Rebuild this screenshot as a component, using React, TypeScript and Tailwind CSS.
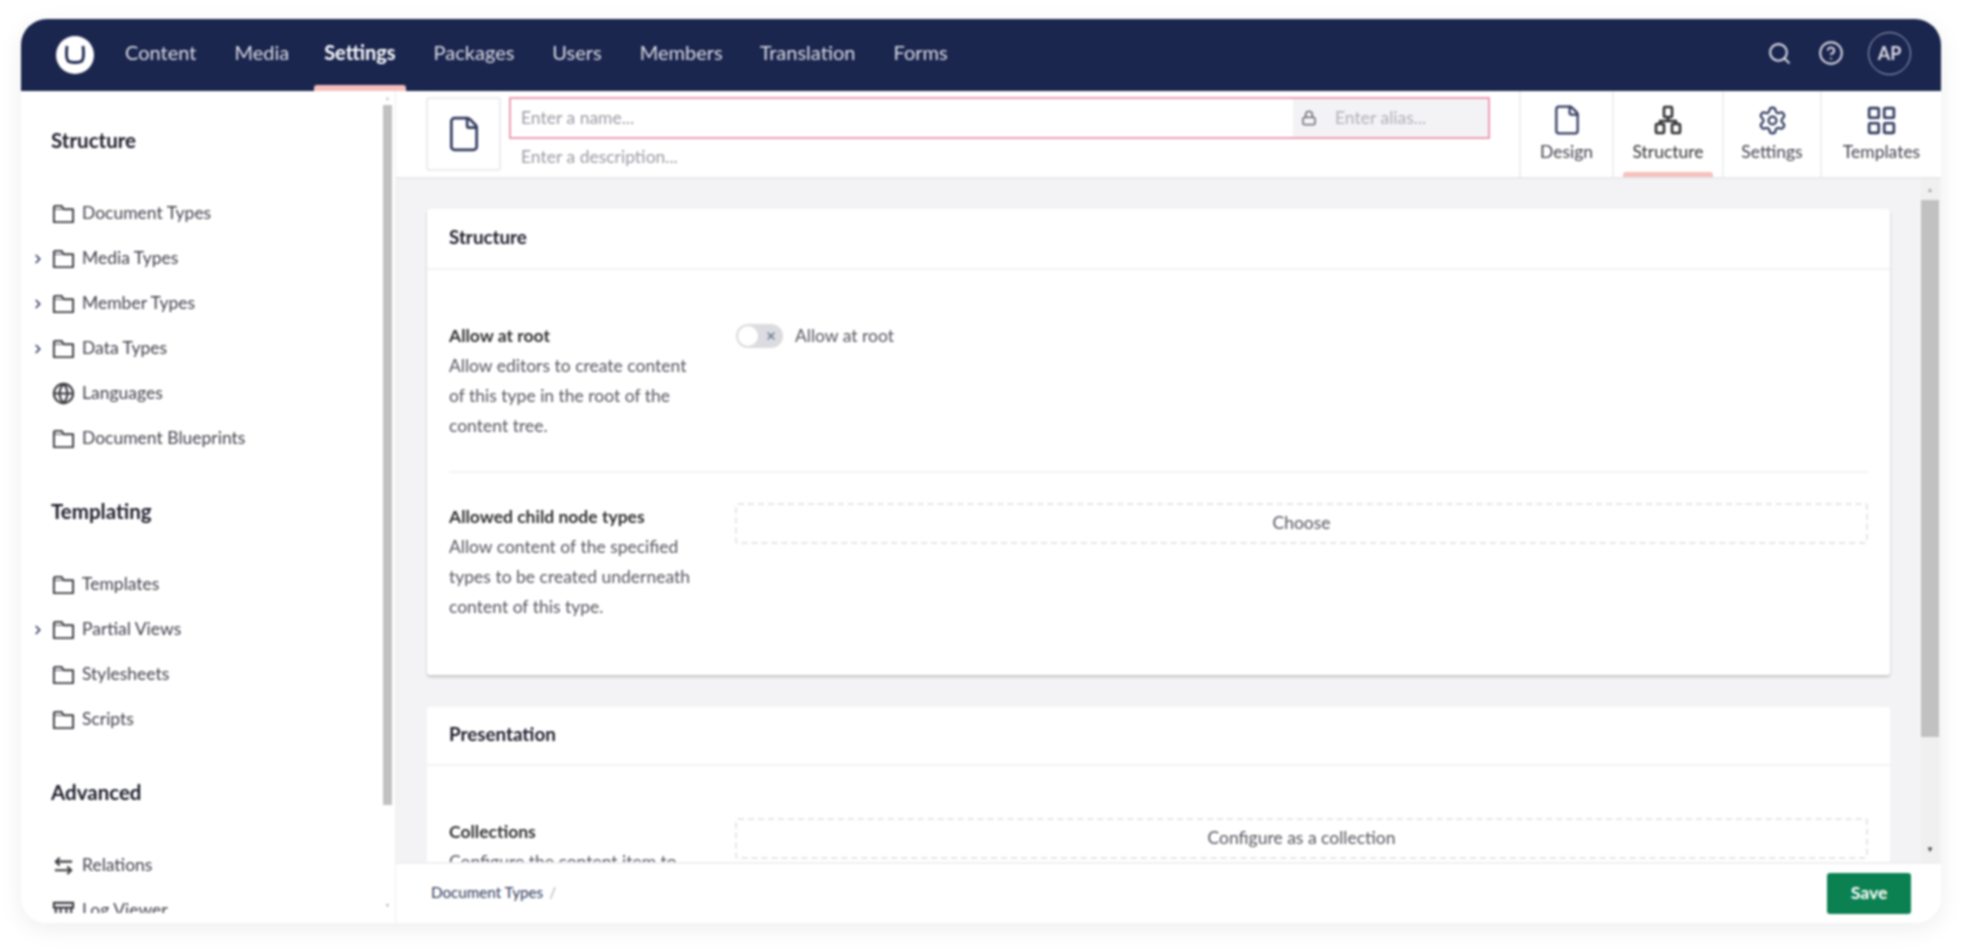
import { ChevronRight, Globe, File, Settings, LayoutGrid, Search, CircleHelp, Lock, X } from "lucide-react";

const navItems = ["Content", "Media", "Settings", "Packages", "Users", "Members", "Translation", "Forms"];

function FolderIcon() {
  return (
    <svg width="23" height="23" viewBox="0 0 24 24" fill="none" stroke="#3b3b42" strokeWidth="2" strokeLinejoin="round">
      <path d="M2 5v16h20V7.500H12L10 4H3.500z" />
      <path d="M11 7.500H2" strokeWidth="1" />
    </svg>
  );
}

function RelationsIcon() {
  return (
    <svg width="23" height="23" viewBox="0 0 24 24" fill="none" stroke="#3b3b42" strokeWidth="2.200">
      <path d="M21 8H4M8 4 4 8l4 4M3 17h17M16 13l4 4-4 4" />
    </svg>
  );
}

function LogIcon() {
  return (
    <svg width="23" height="23" viewBox="0 0 24 24" fill="none" stroke="#3b3b42" strokeWidth="2.200">
      <path d="M2 4h20v5H2zM4 9v12M20 9v12M9 9v7M15 9v7" />
    </svg>
  );
}

function StructureIcon() {
  return (
    <svg width="30" height="30" viewBox="0 0 30 30" fill="none" stroke="#303033" strokeWidth="2.600" strokeLinejoin="round">
      <rect x="11" y="2" width="8" height="10" rx="1" />
      <rect x="3" y="19" width="8" height="9" rx="1" />
      <rect x="19" y="19" width="8" height="9" rx="1" />
      <path d="M15 12v4M7 19v-3h16v3" />
    </svg>
  );
}

function TreeItem({ label, chevron, icon }: { label: string; chevron?: boolean; icon?: React.ReactNode }) {
  return (
    <div className="flex h-[45px] items-center text-[17.500px] text-[#41414d]">
      <div className="flex w-[31px] justify-center pl-[2px]">
        {chevron && <ChevronRight size={14} strokeWidth={3} className="text-[#303a5e]" />}
      </div>
      <div className="flex w-[30px]">{icon ?? <FolderIcon />}</div>
      <span>{label}</span>
    </div>
  );
}

function SideHeading({ children, first }: { children: string; first?: boolean }) {
  return (
    <h3 className={`${first ? "mt-[34px]" : "mt-[35px]"} mb-[36px] h-[30px] pl-[30px] text-[20.500px] leading-[30px] font-bold text-[#1b1b2a]`}>
      {children}
    </h3>
  );
}

function Sidebar() {
  return (
    <aside className="flex w-[374px] shrink-0 bg-white">
      <div className="h-[822px] flex-1 overflow-hidden">
        <SideHeading first>Structure</SideHeading>
        <TreeItem label="Document Types" />
        <TreeItem label="Media Types" chevron />
        <TreeItem label="Member Types" chevron />
        <TreeItem label="Data Types" chevron />
        <TreeItem label="Languages" icon={<Globe size={23} strokeWidth={2.2} className="text-[#3b3b42]" />} />
        <TreeItem label="Document Blueprints" />
        <SideHeading>Templating</SideHeading>
        <TreeItem label="Templates" />
        <TreeItem label="Partial Views" chevron />
        <TreeItem label="Stylesheets" />
        <TreeItem label="Scripts" />
        <SideHeading>Advanced</SideHeading>
        <TreeItem label="Relations" icon={<RelationsIcon />} />
        <TreeItem label="Log Viewer" icon={<LogIcon />} />
      </div>
      <div className="mr-[3px] flex w-[9px] flex-col">
        <div className="flex h-[14px] items-center justify-center text-[6px] leading-none text-[#c8c8c8]">▲</div>
        <div className="h-[700px] bg-[#c1c1c1]" />
        <div className="mt-auto mb-[14px] flex h-[8px] items-center justify-center text-[5px] leading-none text-[#a0a0a0]">▼</div>
      </div>
    </aside>
  );
}

function Tab({ label, active, icon, width }: { label: string; active?: boolean; icon: React.ReactNode; width: string }) {
  return (
    <div className={`${width} relative flex shrink-0 flex-col items-center border-l-2 border-[#f0f0f2] pt-[13px] text-[17.500px] text-[#41414d]`}>
      <div className="flex h-[32px] items-center">{icon}</div>
      <span className={`mt-[3px] ${active ? "text-[#303033]" : ""}`}>{label}</span>
      {active && <div className="absolute right-[9px] bottom-0 left-[9px] h-[5px] rounded-t-[3px] bg-[#f6c1bc]" />}
    </div>
  );
}

function Row({ label, lines, children }: { label: string; lines: string[]; children: React.ReactNode }) {
  return (
    <div className="flex">
      <div className="w-[286px] shrink-0">
        <div className="text-[17.500px] leading-[30px] font-bold text-[#303033]">{label}</div>
        {lines.map((l) => (
          <div key={l} className="text-[17.500px] leading-[30px] whitespace-nowrap text-[#55555f]">
            {l}
          </div>
        ))}
      </div>
      <div className="flex-1">{children}</div>
    </div>
  );
}

function ChooseBox({ label }: { label: string }) {
  return (
    <div className="mt-[1px] flex h-[41px] items-center justify-center rounded-[3px] border-2 border-dashed border-[#e6e6ea] text-[17.500px] text-[#55555f]">
      {label}
    </div>
  );
}

function ContentArea() {
  return (
    <div className="flex h-[683px] bg-[#f3f3f5]">
      <div className="flex-1 overflow-hidden px-[31px] pt-[30px]">
        <section className="h-[466px] rounded-[3px] bg-white shadow-[0_2px_3px_rgba(0,0,0,0.2)]">
          <div className="flex h-[61px] items-center border-b-2 border-[#f3f3f5] px-[22px] pb-[2px] text-[18.800px] font-bold text-[#1b1b2a]">Structure</div>
          <div className="px-[22px] pt-[51px]">
            <Row label="Allow at root" lines={["Allow editors to create content", "of this type in the root of the", "content tree."]}>
              <div className="ml-[1px] flex items-center gap-[12px] pt-[2px]">
                <div className="flex h-[24px] w-[47px] items-center justify-between rounded-full bg-[#dcdce0] px-[2px]">
                  <div className="h-[20px] w-[20px] rounded-full bg-white" />
                  <X size={12} strokeWidth={3} className="mr-[4px] text-[#6c7796]" />
                </div>
                <span className="text-[17.500px] text-[#55555f]">Allow at root</span>
              </div>
            </Row>
            <div className="mt-[30px] mb-[29px] h-[2px] bg-[#f3f3f5]" />
            <Row label="Allowed child node types" lines={["Allow content of the specified", "types to be created underneath", "content of this type."]}>
              <ChooseBox label="Choose" />
            </Row>
          </div>
        </section>
        <section className="mt-[32px] h-[200px] rounded-[3px] bg-white">
          <div className="flex h-[59px] items-center border-b-2 border-[#f3f3f5] px-[22px] pb-[2px] text-[18.800px] font-bold text-[#1b1b2a]">Presentation</div>
          <div className="px-[22px] pt-[51px]">
            <Row label="Collections" lines={["Configure the content item to"]}>
              <ChooseBox label="Configure as a collection" />
            </Row>
          </div>
        </section>
      </div>
      <div className="mr-[2px] flex w-[18px] flex-col bg-[#f0f0f0]">
        <div className="flex h-[21px] items-center justify-center text-[7px] leading-none text-[#a8a8a8]">▲</div>
        <div className="h-[537px] bg-[#c1c1c1]" />
        <div className="mt-auto flex h-[26px] items-center justify-center text-[8px] leading-none text-[#444]">▼</div>
      </div>
    </div>
  );
}

export default function App() {
  return (
    <div className="h-[951px] w-full overflow-hidden bg-white pt-[19px] pl-[21px] [font-family:Lato,'Noto_Sans',sans-serif]">
      <div className="flex h-[904px] w-[1920px] flex-col overflow-hidden rounded-[26px] bg-white shadow-[0_6px_24px_rgba(0,0,0,0.07)] blur-[0.8px]">
        <header className="flex h-[72px] shrink-0 items-center bg-[#1b264f] text-[#dcdce4]">
          <div className="ml-[35px] flex h-[38px] w-[38px] items-center justify-center rounded-full bg-white">
            <svg width="24" height="24" viewBox="0 0 24 24" fill="none" stroke="#1b264f" strokeWidth="2.800">
              <path d="M4 3c-1 8-1 12 1 15 3 2 11 2 14 0 2-3 2-7 1-15" />
            </svg>
          </div>
          <nav className="ml-[12px] flex h-full">
            {navItems.map((n) => (
              <div
                key={n}
                className={`relative flex items-center px-[19px] pb-[6px] text-[20px] ${n === "Settings" ? "-ml-[3px] font-bold text-white" : ""} ${n === "Translation" ? "-ml-[1px]" : ""}`}
              >
                {n}
                {n === "Settings" && <div className="absolute right-[9px] bottom-0 left-[9px] h-[6px] rounded-t-[3px] bg-[#f6c1bc]" />}
              </div>
            ))}
          </nav>
          <div className="mr-[30px] ml-auto flex items-center pb-[4px]">
            <Search size={25} strokeWidth={2} />
            <CircleHelp size={26} strokeWidth={1.8} className="ml-[26px]" />
            <div className="ml-[24px] flex h-[43px] w-[43px] items-center justify-center rounded-full border border-[#a8aec4] text-[18px] font-bold">AP</div>
          </div>
        </header>
        <div className="flex min-h-0 flex-1">
          <Sidebar />
          <main className="flex min-w-0 flex-1 flex-col border-l border-[#f0f0f2]">
            <div className="flex h-[88px] shrink-0 border-b-2 border-[#e9e9ec] bg-white">
              <div className="ml-[30px] mt-[6px] flex h-[74px] w-[75px] items-center justify-center rounded-[3px] border-2 border-[#ececef]">
                <File size={38} strokeWidth={1.7} className="text-[#303a5e]" />
              </div>
              <div className="ml-[8px] w-[981px] pt-[6px]">
                <div className="flex h-[42px] border-2 border-[#f09cb5] text-[17.500px] text-[#9a9aa4]">
                  <div className="flex flex-1 items-center pl-[10px]">Enter a name...</div>
                  <div className="flex w-[195px] items-center bg-[#f3f3f5] pl-[8px]">
                    <Lock size={16} strokeWidth={2} className="text-[#55555f]" />
                    <span className="ml-[18px] text-[#b0b0b8]">Enter alias...</span>
                  </div>
                </div>
                <div className="pt-[6px] pl-[12px] text-[17.500px] leading-[24px] text-[#9a9aa4]">Enter a description...</div>
              </div>
              <div className="ml-auto flex">
                <Tab label="Design" width="w-[93px]" icon={<File size={32} strokeWidth={1.7} className="text-[#303a5e]" />} />
                <Tab label="Structure" active width="w-[110px]" icon={<StructureIcon />} />
                <Tab label="Settings" width="w-[98px]" icon={<Settings size={31} strokeWidth={1.7} className="text-[#303a5e]" />} />
                <Tab label="Templates" width="w-[121px]" icon={<LayoutGrid size={33} strokeWidth={1.9} className="text-[#303a5e]" />} />
              </div>
            </div>
            <ContentArea />
            <footer className="flex min-h-0 flex-1 items-center justify-between border-t-2 border-[#efeff1] bg-white pr-[30px] pl-[35px]">
              <div className="flex items-center gap-[6px] pb-[2px] text-[15.200px] text-[#303a5e]">
                <span>Document Types</span>
                <span className="text-[#b0b0b8]">/</span>
              </div>
              <button className="flex h-[41px] w-[84px] items-center justify-center rounded-[3px] bg-[#0b8152] text-[17.500px] font-bold text-white">Save</button>
            </footer>
          </main>
        </div>
      </div>
    </div>
  );
}
